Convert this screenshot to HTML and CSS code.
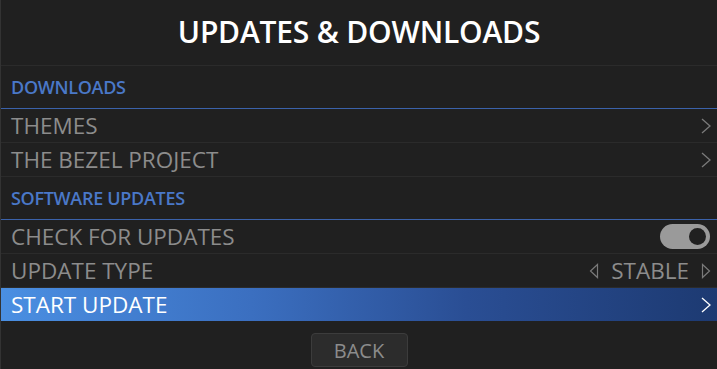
FILE: index.html
```html
<!DOCTYPE html>
<html lang="en">
<head>
    <meta charset="UTF-8">
    <meta name="viewport" content="width=device-width, initial-scale=1.0">
    <title>Updates &amp; Downloads</title>
    <link rel="stylesheet" href="styles.css">
</head>
<body>
    <div class="menu">
        <div class="menu-title">UPDATES &amp; DOWNLOADS</div>

        <div class="group-header">DOWNLOADS</div>
        <div class="row">
            <span class="row-label">THEMES</span>
            <svg class="chevron" viewBox="0 0 10 16"><path d="M1 1 L9 8 L1 15" /></svg>
        </div>
        <div class="row">
            <span class="row-label">THE BEZEL PROJECT</span>
            <svg class="chevron" viewBox="0 0 10 16"><path d="M1 1 L9 8 L1 15" /></svg>
        </div>

        <div class="group-header">SOFTWARE UPDATES</div>
        <div class="row">
            <span class="row-label">CHECK FOR UPDATES</span>
            <div class="switch on"><div class="knob"></div></div>
        </div>
        <div class="row">
            <span class="row-label">UPDATE TYPE</span>
            <div class="picker">
                <svg class="arrow" viewBox="0 0 10 16"><path d="M8.5 1.5 L1.5 8 L8.5 14.5 Z" /></svg>
                <span class="picker-value">STABLE</span>
                <svg class="arrow" viewBox="0 0 10 16"><path d="M1.5 1.5 L8.5 8 L1.5 14.5 Z" /></svg>
            </div>
        </div>
        <div class="row selected">
            <span class="row-label">START UPDATE</span>
            <svg class="chevron" viewBox="0 0 10 16"><path d="M1 1 L9 8 L1 15" /></svg>
        </div>

        <div class="footer">
            <button class="back-btn">BACK</button>
        </div>
    </div>
</body>
</html>
```

FILE: styles.css
```css
body {
    margin: 0;
    background-color: #202020;
    font-family: 'Open Sans', sans-serif;
    overflow: hidden;
}
.menu {
    width: 717px;
    height: 369px;
    box-sizing: border-box;
    border-left: 1px solid #333;
    background-color: #202020;
}
.menu-title {
    height: 66px;
    border-bottom: 1px solid #2b2b2b;
    display: flex;
    align-items: center;
    justify-content: center;
    padding-bottom: 3px;
    box-sizing: border-box;
    color: #fff;
    font-size: 30px;
    font-weight: 600;
    letter-spacing: -0.2px;
}
.group-header {
    height: 43px;
    box-sizing: border-box;
    border-bottom: 1px solid #3b62aa;
    display: flex;
    align-items: center;
    padding-left: 10px;
    color: #4a78c8;
    font-size: 18px;
    font-weight: 600;
    letter-spacing: -0.3px;
}
.row {
    height: 34px;
    box-sizing: border-box;
    border-bottom: 1px solid #2b2b2b;
    display: flex;
    align-items: center;
    justify-content: space-between;
    padding: 0 6px 0 10px;
    color: #8c8c8c;
    font-size: 22.5px;
}
.chevron {
    width: 10px;
    height: 16px;
    fill: none;
    stroke: #7a7a7a;
    stroke-width: 1.3;
}
.selected {
    height: 33px;
    background: linear-gradient(to right, #4a8fe2, #3b6fc0 35%, #2a4e94 65%, #1d3a72);
    color: #fff;
    border-bottom: none;
}
.selected .chevron {
    stroke: #fff;
}
.switch {
    width: 50px;
    height: 25px;
    border-radius: 13px;
    background-color: #9a9a9a;
    position: relative;
    margin-right: 1px;
}
.knob {
    position: absolute;
    top: 4px;
    right: 4px;
    width: 17px;
    height: 17px;
    border-radius: 50%;
    background-color: #202020;
}
.picker {
    display: flex;
    align-items: center;
    gap: 12px;
}
.arrow {
    width: 10px;
    height: 16px;
    fill: none;
    stroke: #7a7a7a;
    stroke-width: 1.2;
}
.picker-value {
    color: #8c8c8c;
}
.footer {
    display: flex;
    justify-content: center;
    padding-top: 12px;
}
.back-btn {
    width: 97px;
    height: 34px;
    background-color: #2c2c2c;
    border: 1px solid #3c3c3c;
    border-radius: 4px;
    color: #8c8c8c;
    font-family: 'Open Sans', sans-serif;
    font-size: 20px;
    padding: 0;
    cursor: pointer;
}
```
